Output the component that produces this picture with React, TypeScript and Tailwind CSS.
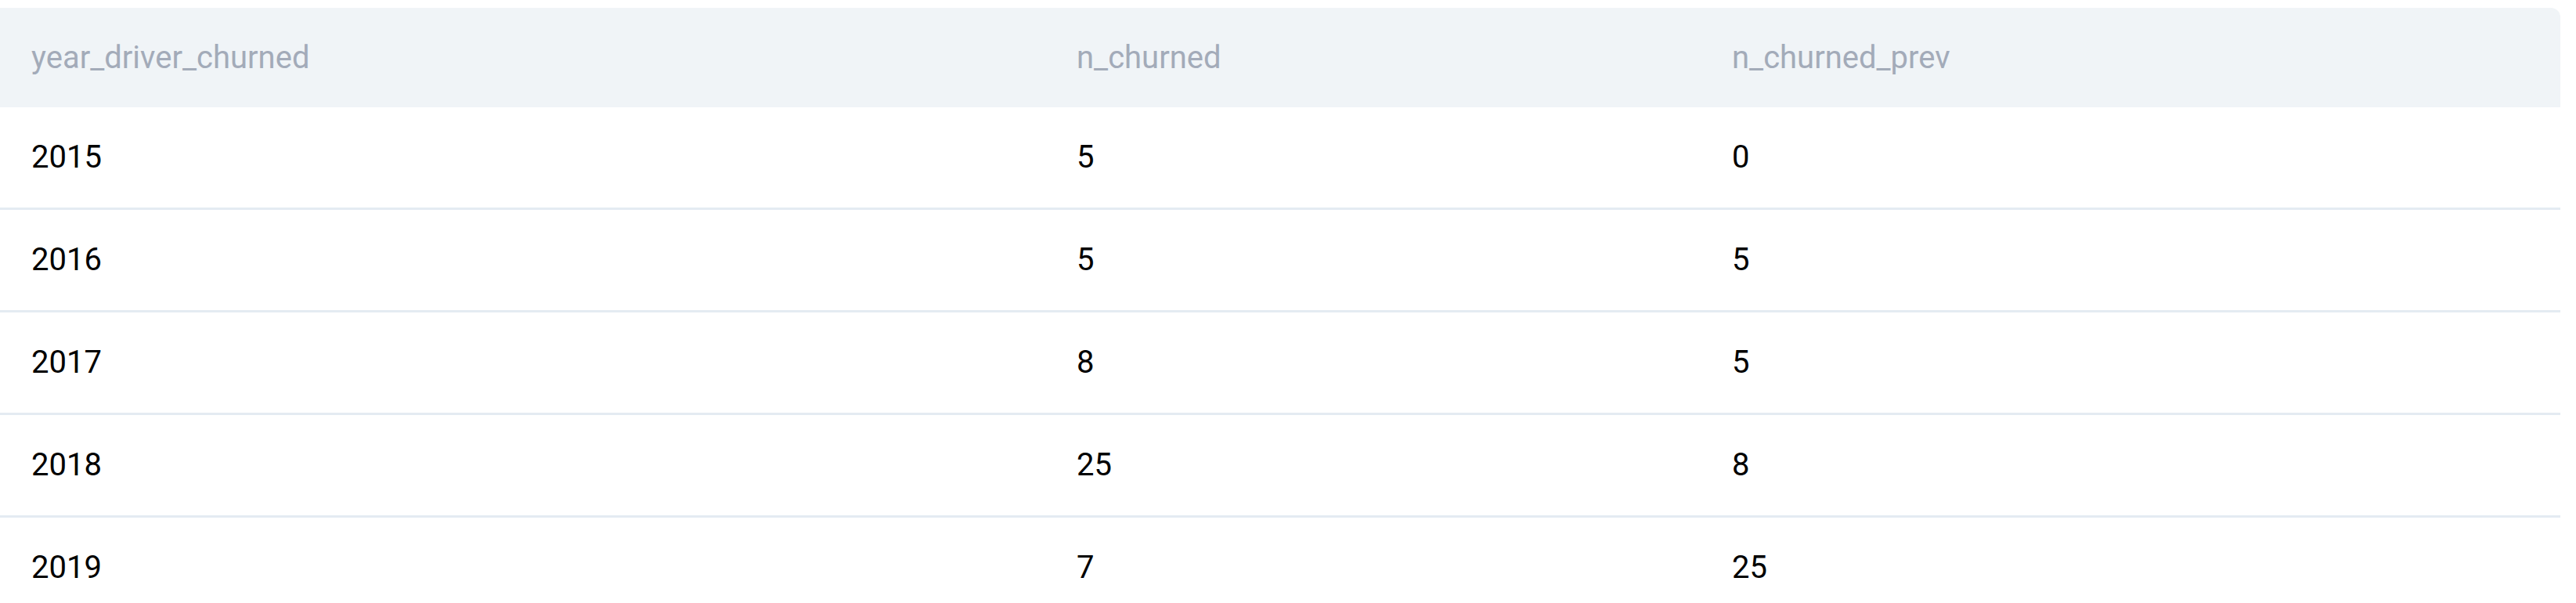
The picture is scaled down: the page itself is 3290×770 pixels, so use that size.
import React from "react";

const rows = [
    ["2015", "5", "0"],
    ["2016", "5", "5"],
    ["2017", "8", "5"],
    ["2018", "25", "8"],
    ["2019", "7", "25"],
];

const cols = ["year_driver_churned", "n_churned", "n_churned_prev"];
const widths = ["w-[1335px]", "w-[837px]", "flex-1"];

export default function App() {
    return (
        <div className="w-[3290px] h-[770px] bg-white overflow-hidden pt-[10px] font-['Roboto',sans-serif]">
            <div className="w-[3270px]">
                <div className="flex items-center h-[127px] bg-[#f0f4f7] rounded-tr-[12px] text-[40px] text-[#a3abb9]">
                    {cols.map((c, i) => (
                        <div key={c} className={`${widths[i]} pl-[40px]`}>
                            {c}
                        </div>
                    ))}
                </div>
                {rows.map((r) => (
                    <div key={r[0]} className="flex items-center h-[131px] border-b-[3px] border-[#e4ebf2] text-[40px] text-black">
                        {r.map((v, i) => (
                            <div key={i} className={`${widths[i]} pl-[40px]`}>
                                {v}
                            </div>
                        ))}
                    </div>
                ))}
            </div>
        </div>
    );
}
